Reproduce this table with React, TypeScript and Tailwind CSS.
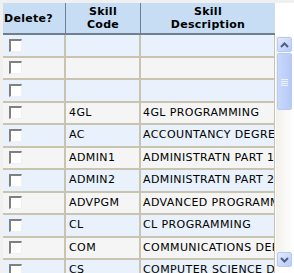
import React from "react";

type SkillRow = { code: string; description: string };

const rows: SkillRow[] = [
  { code: "", description: "" },
  { code: "", description: "" },
  { code: "", description: "" },
  { code: "4GL", description: "4GL PROGRAMMING" },
  { code: "AC", description: "ACCOUNTANCY DEGREE" },
  { code: "ADMIN1", description: "ADMINISTRATN PART 1" },
  { code: "ADMIN2", description: "ADMINISTRATN PART 2" },
  { code: "ADVPGM", description: "ADVANCED PROGRAMMING" },
  { code: "CL", description: "CL PROGRAMMING" },
  { code: "COM", description: "COMMUNICATIONS DEPT" },
  { code: "CS", description: "COMPUTER SCIENCE DEGREE" },
];

function Checkbox() {
  return (
    <span className="block h-[13px] w-[13px] border-t-[2px] border-l-[2px] border-r border-b border-t-[#808080] border-l-[#808080] border-r-[#f0f0f0] border-b-[#f0f0f0] bg-white" />
  );
}

function Arrow({ up }: { up?: boolean }) {
  return (
    <svg width="9" height="6" viewBox="0 0 9 6" className="block">
      <path
        d={up ? "M1 5 L4.5 1.5 L8 5" : "M1 1 L4.5 4.5 L8 1"}
        fill="none"
        stroke="#4d6185"
        strokeWidth="2"
      />
    </svg>
  );
}

function ScrollButton({ up }: { up?: boolean }) {
  return (
    <div className="flex h-[15px] w-[15px] items-center justify-center rounded-[2px] border border-[#b7caf5] bg-gradient-to-br from-[#e2eafe] to-[#b8cbf7]">
      <Arrow up={up} />
    </div>
  );
}

function Scrollbar() {
  return (
    <div className="flex h-[231px] w-[17px] flex-col items-center bg-gradient-to-r from-[#f3f1ec] to-[#fefefe] pt-[1px]">
      <ScrollButton up />
      <div className="mt-[1px] flex h-[57px] w-[15px] flex-col items-center justify-center gap-[1px] rounded-[2px] border border-[#b7caf5] bg-gradient-to-r from-[#c9d8fc] to-[#b6c9f7]">
        <span className="mt-[2px] h-px w-[7px] bg-[#eef3fe]" />
        <span className="h-px w-[7px] bg-[#eef3fe]" />
        <span className="h-px w-[7px] bg-[#eef3fe]" />
        <span className="h-px w-[7px] bg-[#eef3fe]" />
      </div>
      <div className="flex-1" />
      <ScrollButton />
    </div>
  );
}

export default function App() {
  return (
    <div
      className="h-[273px] w-[294px] overflow-hidden bg-[#f0f0f0] pl-[3px] pt-[3px] text-[11px] text-black"
      style={{ fontFamily: "'DejaVu Sans', Verdana, sans-serif" }}
    >
      <div className="flex">
        <div className="w-[272px] shrink-0">
          <div className="grid h-[32px] grid-cols-[63px_75px_134px] border-b-2 border-[#6f7f8f] bg-[#c6ddf4] font-bold leading-[13px] tracking-[0.3px]">
            <div className="flex items-center border-r border-[#6f7f8f] pl-[1px]">Delete?</div>
            <div className="flex items-center justify-center border-r border-[#6f7f8f] text-center">
              Skill
              <br />
              Code
            </div>
            <div className="flex items-center justify-center text-center">
              Skill
              <br />
              Description
            </div>
          </div>
          {rows.map((row, i) => (
            <div
              key={i}
              className={`grid h-[22.5px] grid-cols-[63px_75px_134px] border-b-2 border-[#c8c4b0] tracking-[0.4px] ${
                i % 2 === 0 ? "bg-[#e8f1fc]" : "bg-[#f5f5f5]"
              }`}
            >
              <div className="flex items-center border-r-2 border-[#c8c4b0] pl-[6px]">
                <Checkbox />
              </div>
              <div className="flex items-center overflow-hidden whitespace-nowrap border-r-2 border-[#c8c4b0] pl-[3px]">
                {row.code}
              </div>
              <div className="flex items-center overflow-hidden whitespace-nowrap border-r border-[#c8c4b0] pl-[2px]">
                {row.description}
              </div>
            </div>
          ))}
        </div>
        <div className="flex flex-1 flex-col bg-white">
          <div className="h-[33px] bg-white" />
          <div className="pl-[1px]">
            <Scrollbar />
          </div>
        </div>
      </div>
    </div>
  );
}
